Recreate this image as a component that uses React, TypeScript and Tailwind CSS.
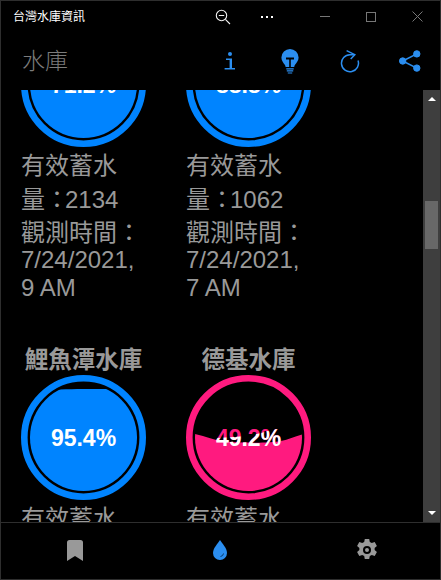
type Reservoir = {
  name?: string;
  percent: string;
  volume?: string;
  time?: string;
  color: string;
  wave: string;
  textWave?: string;
};

const rows: Reservoir[][] = [
  [
    {
      percent: "71.2%",
      volume: "2134",
      time: "7/24/2021, 9 AM",
      color: "#0084ff",
      wave: "M0 -5 H125 V125 H0 Z",
    },
    {
      percent: "88.8%",
      volume: "1062",
      time: "7/24/2021, 7 AM",
      color: "#0084ff",
      wave: "M0 -5 H125 V125 H0 Z",
    },
  ],
  [
    {
      name: "鯉魚潭水庫",
      percent: "95.4%",
      color: "#0084ff",
      wave: "M0 16 C30 15 45 14 62 14 H125 V125 H0 Z",
    },
    {
      name: "德基水庫",
      percent: "49.2%",
      color: "#ff1a7f",
      wave: "M0 58 C15 58 25 66 45 67 C65 68 85 68 95 66 C105 64 112 59 125 58 V125 H0 Z",
      textWave: "M0 64 C30 63 60 62 75 58 C85 55 95 52 125 52 V125 H0 Z",
    },
  ],
];

function Gauge({ item, id }: { item: Reservoir; id: string }) {
  return (
    <svg width="125" height="125" viewBox="0 0 125 125" className="block">
      <defs>
        <clipPath id={`${id}-circle`}>
          <circle cx="62.5" cy="62.5" r="53.5" />
        </clipPath>
        <clipPath id={`${id}-wave`}>
          <path d={item.textWave ?? item.wave} />
        </clipPath>
      </defs>
      <circle cx="62.5" cy="62.5" r="59.2" fill="none" stroke={item.color} strokeWidth="6.6" />
      <g clipPath={`url(#${id}-circle)`}>
        <path d={item.wave} fill={item.color} />
      </g>
      <text
        x="62.5"
        y="71"
        textAnchor="middle"
        fill={item.color}
        className="text-[23px] font-bold"
      >
        {item.percent}
      </text>
      <g clipPath={`url(#${id}-wave)`}>
        <text x="62.5" y="71" textAnchor="middle" fill="#fff" className="text-[23px] font-bold">
          {item.percent}
        </text>
      </g>
    </svg>
  );
}

function Card({ item, id }: { item: Reservoir; id: string }) {
  return (
    <div className="w-[125px] shrink-0">
      {item.name && (
        <div className="h-[28px] text-center text-[23.5px] leading-[26px] font-bold text-[#999] whitespace-nowrap">
          {item.name}
        </div>
      )}
      <Gauge item={item} id={id} />
      <div className="mt-[2px] text-[24px] text-[#999]">
        <div className="leading-[33.5px]">
          有效蓄水量<span className="tracking-[-4px]">：</span>
          {item.volume}
        </div>
        {item.time && (
          <>
            <div className="leading-[33px]">觀測時間：</div>
            <div className="-mt-[3px] leading-[28px]">{item.time}</div>
          </>
        )}
      </div>
    </div>
  );
}

function TitleBar() {
  return (
    <div className="flex h-[31px] items-center pl-[12px] text-white">
      <span className="flex-1 text-[12px]">台灣水庫資訊</span>
      <button className="flex h-full w-[44px] items-center justify-center">
        <svg width="16" height="16" viewBox="0 0 16 16" fill="none" stroke="#f2f2f2" strokeWidth="1.1">
          <circle cx="6.5" cy="6.5" r="5.2" />
          <path d="M3.8 6.5h5.4M10.4 10.4L15 15" />
        </svg>
      </button>
      <button className="flex h-full w-[44px] items-center justify-center gap-[3px]">
        <span className="h-[2px] w-[2px] bg-white" />
        <span className="h-[2px] w-[2px] bg-white" />
        <span className="h-[2px] w-[2px] bg-white" />
      </button>
      <div className="w-[13px]" />
      <button className="flex h-full w-[46px] items-center justify-center">
        <span className="h-px w-[10px] bg-[#777]" />
      </button>
      <button className="flex h-full w-[46px] items-center justify-center">
        <span className="h-[10px] w-[10px] border border-[#777]" />
      </button>
      <button className="flex h-full w-[46px] items-center justify-center">
        <svg width="11" height="11" viewBox="0 0 11 11" stroke="#777" strokeWidth="1">
          <path d="M.5 .5l10 10M10.5 .5l-10 10" />
        </svg>
      </button>
    </div>
  );
}

function Header() {
  return (
    <div className="flex h-[58px] items-center pl-[21px]">
      <span className="flex-1 text-[23px] font-light text-[#7c7c7c]">水庫</span>
      <div className="flex w-[60px] justify-center">
        <svg width="12" height="20" viewBox="0 0 12 20" fill="#2b8ef0">
          <circle cx="6" cy="3" r="2" />
          <path d="M2 7.5h6V17h3v1.6H.6V17h5V9H2z" />
        </svg>
      </div>
      <div className="flex w-[60px] justify-center">
        <svg width="18" height="25" viewBox="0 0 18 25" fill="#2b8ef0">
          <path d="M9 0a8.6 8.6 0 0 0-8.6 8.6c0 3.4 2 5.2 3.2 7 .6.9.9 1.7 1 2.4h3.6V10.6H5V8.4h8v2.200H9.8V18h3.400c.1-.7.4-1.5 1-2.400 1.2-1.8 3.4-3.6 3.4-7A8.6 8.6 0 0 0 9 0z" />
          <path d="M5.3 19.2h7.4v1.300H5.300zM5.800 21.300h6.400v1.300H5.800zM6.800 23.400h4.400V24.600H6.800z" />
        </svg>
      </div>
      <div className="flex w-[60px] justify-center">
        <svg width="20" height="24" viewBox="0 0 20 24" fill="none" stroke="#2b8ef0" strokeWidth="1.5">
          <path d="M18 11.4A8.5 8.5 0 1 1 10 5.7h4" />
          <path d="M6.600 1.700L14.800 5.700L10.700 10" />
        </svg>
      </div>
      <div className="flex w-[60px] justify-center pr-[1px]">
        <svg width="22" height="22" viewBox="0 0 22 22" fill="#2b8ef0" stroke="#2b8ef0">
          <circle cx="17.8" cy="3.9" r="3.2" />
          <circle cx="17.8" cy="18.1" r="3.2" />
          <circle cx="3.7" cy="11" r="3.2" />
          <path d="M17.8 3.9L3.7 11l14.1 7.1" fill="none" strokeWidth="1.6" />
        </svg>
      </div>
    </div>
  );
}

function ScrollBar() {
  return (
    <div className="flex w-[17px] shrink-0 flex-col items-center justify-between bg-[#3e3e3e]">
      <div className="h-0 w-0 mt-[7px] border-x-[4px] border-b-[4px] border-x-transparent border-b-white" />
      <div className="absolute mt-[111px] h-[48px] w-[13px] bg-[#686868]" />
      <div className="h-0 w-0 mb-[7px] border-x-[4px] border-t-[4px] border-x-transparent border-t-white" />
    </div>
  );
}

function BottomBar() {
  return (
    <div className="grid h-[57px] grid-cols-3 items-center border-t border-[#2e2e2e] pb-[2px]">
      <div className="flex justify-center pl-[1px]">
        <svg width="16" height="21" viewBox="0 0 16 21" fill="#999">
          <path d="M2.5 0h11A2.5 2.5 0 0 1 16 2.5V21l-8-5-8 5V2.5A2.5 2.5 0 0 1 2.5 0z" />
        </svg>
      </div>
      <div className="flex justify-center">
        <svg width="14" height="20" viewBox="0 0 14 20">
          <path d="M7 0c2 3.5 7 8 7 13a7 7 0 0 1-14 0C0 8 5 3.500 7 0z" fill="#2b8ef0" />
          <path d="M10.500 13.500a3.500 3.500 0 0 1-3 3" fill="none" stroke="#0a3a6a" strokeWidth="1" />
        </svg>
      </div>
      <div className="flex justify-center">
        <svg width="24" height="24" viewBox="0 0 24 24" fill="#999" fillRule="evenodd">
          <path d="M14.2 1l.6 3 2 1.100 2.900-1 2.200 3.800-2.300 2 .1 1.100-.1 1.100 2.300 2-2.200 3.800-2.900-1-2 1.100-.6 3H9.800l-.6-3-2-1.100-2.900 1-2.200-3.800 2.300-2-.1-1.100.1-1.100-2.300-2 2.200-3.800 2.900 1 2-1.100.6-3zM12 8a4 4 0 1 0 0 8 4 4 0 0 0 0-8zm0 2a2 2 0 1 1 0 4 2 2 0 0 1 0-4z" />
        </svg>
      </div>
    </div>
  );
}

export default function App() {
  return (
    <div className="flex h-[580px] w-[441px] flex-col overflow-hidden border border-[#2e2e2e] bg-black font-['Liberation_Sans','Noto_Sans_CJK_TC',sans-serif]">
      <TitleBar />
      <Header />
      <div className="flex min-h-0 flex-1">
        <div className="min-w-0 flex-1 overflow-hidden pl-[20px]">
          <div className="-mt-[68px] flex flex-col gap-[45px]">
            {rows.map((row, r) => (
              <div key={r} className="flex gap-[40px]">
                {row.map((item, i) => (
                  <Card key={i} item={item} id={`g${r}${i}`} />
                ))}
              </div>
            ))}
          </div>
        </div>
        <ScrollBar />
      </div>
      <BottomBar />
    </div>
  );
}
